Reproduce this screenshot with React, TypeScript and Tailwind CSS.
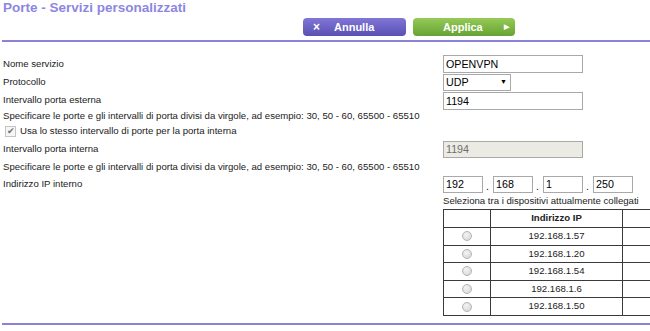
import { ReactNode } from "react";

const devices = ["192.168.1.57", "192.168.1.20", "192.168.1.54", "192.168.1.6", "192.168.1.50"];

function TextBox({ value, width, disabled }: { value: string; width: string; disabled?: boolean }) {
  return (
    <div
      className={`${width} flex h-full items-center border border-[#a9a9a9] px-[2px] text-[10.7px] ${
        disabled ? "bg-[#ebebe4] text-[#6d6d6d]" : "bg-white text-black"
      }`}
    >
      {value}
    </div>
  );
}

function Label({ children }: { children: ReactNode }) {
  return <div className="flex items-center">{children}</div>;
}

function Radio() {
  return (
    <span className="inline-block h-[10px] w-[10px] rounded-full border border-[#b5b5b5] bg-[radial-gradient(circle_at_40%_35%,#f4f4f4,#d2d2d2)]" />
  );
}

export default function App() {
  return (
    <div className="h-[331px] w-[650px] overflow-hidden bg-white font-['Liberation_Sans',Arial,sans-serif] text-[9.6px] text-[#222]">
      <div className="h-[18px] pl-[3px] text-[13.5px] font-bold leading-[15px] text-[#8d86e2]">
        Porte - Servizi personalizzati
      </div>

      <div className="flex h-[18px] gap-[7px] pl-[303px]">
        <button className="flex h-[18px] w-[103px] items-center rounded-[4px] bg-gradient-to-b from-[#7f76d6] to-[#5a50b2] pl-[10px] text-[11px] font-bold text-white">
          <span className="w-[21px] text-left text-[12px]">×</span>
          <span>Annulla</span>
        </button>
        <button className="flex h-[18px] w-[102px] items-center rounded-[4px] bg-gradient-to-b from-[#95ca56] to-[#66a334] pl-[30px] text-[11px] font-bold text-white">
          <span className="w-[61px] text-left">Applica</span>
          <span className="text-[7px]">▶</span>
        </button>
      </div>

      <div className="ml-[2px] mt-[4px] h-[2px] bg-[#8a82d8]" />

      <div className="mt-[13px] grid grid-cols-[440px_1fr] pl-[3px]">
        <Label>Nome servizio</Label>
        <div className="h-[18px]">
          <TextBox value="OPENVPN" width="w-[140px]" />
        </div>

        <Label>Protocollo</Label>
        <div className="mt-[1px] h-[17px]">
          <div className="flex h-full w-[68px] items-center justify-between border border-[#a9a9a9] bg-white pl-[2px] pr-[3px] text-[10.7px] text-black">
            <span>UDP</span>
            <span className="text-[7px]">▼</span>
          </div>
        </div>

        <Label>Intervallo porta esterna</Label>
        <div className="mt-[1px] h-[18px]">
          <TextBox value="1194" width="w-[140px]" />
        </div>

        <div className="col-span-2 flex h-[13px] items-center">
          Specificare le porte e gli intervalli di porta divisi da virgole, ad esempio: 30, 50 - 60, 65500 - 65510
        </div>

        <div className="col-span-2 flex h-[17px] items-center gap-[4px] pl-[2px]">
          <span className="flex h-[11px] w-[11px] items-center justify-center border border-[#c4c4c4] bg-[#f6f6f6] text-[9px] leading-none text-[#707070]">
            ✔
          </span>
          <span>Usa lo stesso intervallo di porte per la porta interna</span>
        </div>

        <Label>Intervallo porta interna</Label>
        <div className="mt-[1px] h-[17px]">
          <TextBox value="1194" width="w-[140px]" disabled />
        </div>

        <div className="col-span-2 flex h-[18px] items-center">
          Specificare le porte e gli intervalli di porta divisi da virgole, ad esempio: 30, 50 - 60, 65500 - 65510
        </div>

        <Label>Indirizzo IP interno</Label>
        <div className="flex h-[17px] items-end">
          {["192", "168", "1", "250"].map((part, i) => (
            <div key={part} className="flex h-full items-end">
              <TextBox value={part} width="w-[40px]" />
              {i < 3 && <span className="w-[10px] pl-[3px] text-[10.7px] leading-[14px]">.</span>}
            </div>
          ))}
        </div>

        <div />
        <div className="flex h-[16px] items-center">Seleziona tra i dispositivi attualmente collegati</div>

        <div />
        <table className="w-[260px] border-collapse border border-[#3a3a3a]">
          <thead>
            <tr className="h-[18px]">
              <th className="w-[47px] border border-[#3a3a3a]" />
              <th className="w-[132px] border border-[#3a3a3a] font-bold">Indirizzo IP</th>
              <th className="border border-[#3a3a3a]" />
            </tr>
          </thead>
          <tbody>
            {devices.map((ip) => (
              <tr key={ip} className="h-[17.6px]">
                <td className="border border-[#3a3a3a] text-center">
                  <div className="flex items-center justify-center">
                    <Radio />
                  </div>
                </td>
                <td className="border border-[#3a3a3a] text-center">{ip}</td>
                <td className="border border-[#3a3a3a]" />
              </tr>
            ))}
          </tbody>
        </table>
      </div>

      <div className="ml-[2px] mt-[7px] h-[2px] bg-[#8a82d8]" />
    </div>
  );
}
